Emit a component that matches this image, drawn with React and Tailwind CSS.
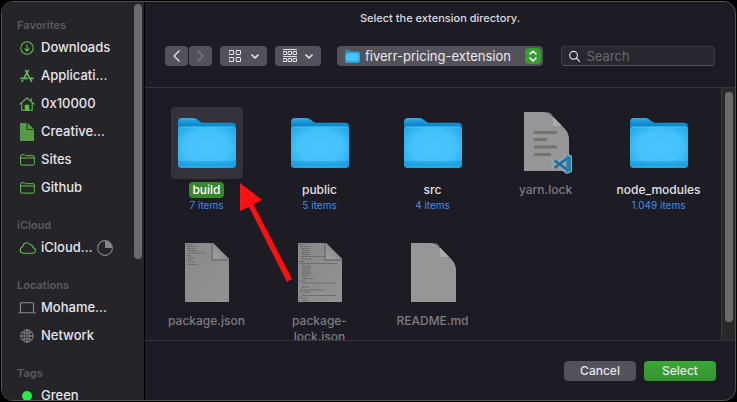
import React from "react";

function Svg({ children, ...props }) {
  return (
    <svg fill="none" stroke="currentColor" strokeLinecap="round" strokeLinejoin="round" aria-hidden="true" {...props}>
      {children}
    </svg>
  );
}

const DownloadIcon = () => (
  <Svg width="14" height="14" viewBox="0 0 14 14" strokeWidth="1.1">
    <circle cx="7" cy="7" r="6.2" />
    <path d="M7 3.8v6M4.8 7.8 7 10l2.2-2.2" />
  </Svg>
);

const AppsIcon = () => (
  <Svg width="14" height="14" viewBox="0 0 14 14" strokeWidth="1.6">
    <path d="M5.6 1.4 11.6 12.4M8.3 1.4 3.9 9.2M1 9.4h6.6M10.6 9.4H13M2.6 11.4l-.6 1" />
  </Svg>
);

const HomeIcon = () => (
  <Svg width="16" height="14" viewBox="0 0 16 14" strokeWidth="1.1">
    <path d="M1 7.2 8 1l7 6.2M2.8 6v7.2h10.4V6M12.3 4.4V1.6" />
    <path d="M6.3 13.2V8.4h3.4v4.8z" fill="currentColor" />
  </Svg>
);

const FileIcon = () => (
  <svg width="14" height="18" viewBox="0 0 14 18" fill="#559b45" aria-hidden="true">
    <path d="M0 0h6.6v6.8H14V18H0z" />
    <path d="M7.6 0 14 5.9H7.6z" />
  </svg>
);

const FolderIcon = () => (
  <Svg width="15" height="12" viewBox="0 0 15 12" strokeWidth="1">
    <path d="M.6 9.8V1.9q0-1.2 1.2-1.2h2.5q.6 0 1 .4l.6.6h7.2q1.2 0 1.2 1.2v7q0 1.2-1.2 1.2H1.8Q.6 11.1.6 9.8zM.6 4h13.7" />
  </Svg>
);

const CloudIcon = () => (
  <Svg width="17" height="12" viewBox="0 0 17 12" strokeWidth="1.1">
    <path d="M4 11.2h9.3a2.7 2.7 0 0 0 .6-5.4A3 3 0 0 0 10.9 2.5 3.9 3.9 0 0 0 3.8 4.7 3.3 3.3 0 0 0 4 11.2z" />
  </Svg>
);

const LaptopIcon = () => (
  <Svg width="18" height="12" viewBox="0 0 18 12" strokeWidth="1.1">
    <path d="M2.5 9.5V1.6q0-.8.8-.8h11.4q.8 0 .8.8v7.9M.7 10.8h16.6" />
  </Svg>
);

const GlobeIcon = () => (
  <Svg width="14" height="14" viewBox="0 0 14 14" strokeWidth=".9">
    <circle cx="7" cy="7" r="6.2" />
    <ellipse cx="7" cy="7" rx="3" ry="6.2" />
    <path d="M7 .8v12.4M.8 7h12.4M2 3.5q5 2 10 0M2 10.5q5-2 10 0" />
  </Svg>
);

const TagDot = () => <span className="size-2.5 rounded-full bg-[#2bea4b]" />;

const sections = [
  {
    title: "Favorites",
    items: [
      { label: "Downloads", icon: DownloadIcon },
      { label: "Applicati...", icon: AppsIcon },
      { label: "0x10000", icon: HomeIcon },
      { label: "Creative...", icon: FileIcon },
      { label: "Sites", icon: FolderIcon },
      { label: "Github", icon: FolderIcon },
    ],
  },
  { title: "iCloud", items: [{ label: "iCloud...", icon: CloudIcon, progress: true }] },
  {
    title: "Locations",
    items: [
      { label: "Mohame...", icon: LaptopIcon, muted: true },
      { label: "Network", icon: GlobeIcon, muted: true },
    ],
  },
  { title: "Tags", items: [{ label: "Green", icon: TagDot }] },
];

function Sidebar() {
  return (
    <nav aria-label="Places" className="flex w-[143px] shrink-0 justify-between overflow-hidden border-r border-black bg-[#252428] pr-[2px]">
      <div className="flex flex-col gap-4 pl-[15px] pt-[15px]">
        {sections.map((section) => (
          <section key={section.title}>
            <h2 className="text-[11px] leading-4 font-semibold text-[#5c5b60]">{section.title}</h2>
            <ul>
              {section.items.map(({ label, icon: Icon, muted, progress }) => (
                <li key={label}>
                  <a href="#" className="flex h-7 items-center gap-1 pt-0.5 whitespace-nowrap text-[13px] font-medium text-[#e6e5e8]">
                    <span className={`flex w-5 justify-center ${muted ? "text-[#8b8a8f]" : "text-[#5fbd4c]"}`}>
                      <Icon />
                    </span>
                    {label}
                    {progress && (
                      <svg width="16" height="16" viewBox="0 0 16 16" aria-hidden="true">
                        <circle cx="8" cy="8" r="7.4" fill="none" stroke="#858489" strokeWidth="1.1" />
                        <path d="M8 8V1a7 7 0 0 1 7 7z" fill="#858489" />
                      </svg>
                    )}
                  </a>
                </li>
              ))}
            </ul>
          </section>
        ))}
      </div>
      <div className="mt-[2px] h-[255px] w-2 shrink-0 rounded-full bg-[#6a696d]" />
    </nav>
  );
}

function Gradients() {
  return (
    <svg width="0" height="0" className="absolute" aria-hidden="true">
      <defs>
        <radialGradient id="folderFront" cx=".5" cy=".5" r=".72">
          <stop offset="0" stopColor="#4cc7fe" />
          <stop offset=".55" stopColor="#44c1fa" />
          <stop offset="1" stopColor="#1ba3e2" />
        </radialGradient>
        <linearGradient id="folderBack" gradientUnits="userSpaceOnUse" x1="0" y1="1" x2="0" y2="10">
          <stop offset="0" stopColor="#38aee6" />
          <stop offset=".5" stopColor="#1593d3" />
          <stop offset="1" stopColor="#0783c6" />
        </linearGradient>
        <linearGradient id="paper" x1="0" y1="0" x2="1" y2="1">
          <stop offset="0" stopColor="#898989" />
          <stop offset="1" stopColor="#929292" />
        </linearGradient>
        <linearGradient id="fold" x1="0" y1="1" x2="1" y2="0">
          <stop offset="0" stopColor="#a4a4a4" />
          <stop offset="1" stopColor="#777777" />
        </linearGradient>
      </defs>
    </svg>
  );
}

function BigFolder({ className }) {
  return (
    <svg className={className} viewBox="0 0 60 52" aria-hidden="true">
      <path d="M1 5q0-4 4-4h11q3 0 5 2l2 1.5q1.500 1.300 4 1.300h28q4 0 4 4V30H1z" fill="url(#folderBack)" />
      <path d="M1 13q0-3.500 3.500-3.500h51Q59 9.500 59 13v34q0 4-4 4H5q-4 0-4-4z" fill="url(#folderFront)" />
      <path d="M1.500 11.500q.5-1.500 3.500-1.500h50q3 0 3.500 1.500" fill="none" stroke="#66c9f5" strokeWidth=".6" />
      <path d="M1 45h58v2q0 4-4 4H5q-4 0-4-4z" fill="#159fdf" fillOpacity=".6" />
      <path d="M1 44.500h58M1.500 47.500h57" stroke="#1c93cc" strokeWidth=".5" />
    </svg>
  );
}

function TextLines({ rows }) {
  return rows.map(([x, y, w]) => <path key={y} d={`M${x} ${y}h${w}`} stroke="#5f5f5f" strokeWidth=".8" strokeDasharray="3 .5" />);
}

const shortRows = [[1, 1.5, 6], [2, 3.5, 9], [2, 5.5, 8], [3, 7.5, 9], [3, 10, 18], [2, 12.5, 4], [3, 14.5, 5], [1, 16.5, 7], [3, 19, 8], [3, 21.5, 9]];
const longRows = [[1, 1.5, 6], [2, 3.5, 10], [3, 5.5, 9], [4, 7.5, 7], [3, 9.5, 9], [4, 11.5, 8], [3, 13.5, 36], [4, 16, 10], [1, 18.5, 6], [2, 20.5, 37], [3, 23, 10], [4, 25, 9], [4, 27, 8], [4, 29, 9], [3, 31, 10], [4, 33, 6], [4, 35.5, 12], [1, 38, 6], [4, 40, 34], [4, 44, 7], [2, 47, 24], [2, 49, 10], [4, 52.5, 34], [1, 55, 8], [4, 57.5, 6]];

function JsonFile({ rows }) {
  return (
    <svg width="44" height="62" viewBox="0 0 44 62" aria-hidden="true">
      <path d="M0 0h28l16 16v43H0z" fill="url(#paper)" />
      <TextLines rows={rows} />
      <path d="M26 0h2v16h16v2H26z" fill="#666666" fillOpacity=".55" />
      <path d="M28 0 44 16H28z" fill="url(#fold)" />
    </svg>
  );
}

function PlainFile({ code }) {
  return (
    <svg width="52" height="62" viewBox="0 0 52 62" aria-hidden="true">
      <path d="M4 0h20q4 0 7.5 3.5l13 13Q49 21 49 27v32H4z" fill="#969696" />
      <path d="M24 0q4 0 6.500 2.500L45 17q-4-3-8-3h-4V6q0-4-4-5.500z" fill="#858585" />
      <path d="M33 4.500 42 14h-9z" fill="#aaaaaa" />
      {code && (
        <g>
          <path d="M14 20.500h23M14 27.500h13M14 35h23M14 42.500h17" stroke="#737373" strokeWidth="3" />
          <path d="m37 50 9-7.500h2l5 2.500v15l-5 2.500h-2L37 55l-3 3-2.500-2v-3l1.500-1-1.500-1v-3l2.500-2z" transform="translate(0 -.8)" fill="#8fa5b1" />
          <path d="m34.500 48.500 13 9.500M34.500 56 47.500 46" stroke="#226f9f" strokeWidth="2.600" fill="none" />
          <path d="m46.500 43 4.500 2v14l-4.500 2z" fill="#2a7eae" />
        </g>
      )}
    </svg>
  );
}

const files = [
  { name: "build", count: "7 items", selected: true },
  { name: "public", count: "5 items" },
  { name: "src", count: "4 items" },
  { name: "yarn.lock", art: <PlainFile code /> },
  { name: "node_modules", count: "1.049 items" },
  { name: "package.json", art: <JsonFile rows={shortRows} /> },
  { name: "package-lock.json", art: <JsonFile rows={longRows} /> },
  { name: "README.md", art: <PlainFile /> },
];

function FileTile({ name, count, selected, art }) {
  return (
    <button type="button" disabled={!count} aria-pressed={!!selected} className="flex flex-col items-center justify-start">
      <span className={`flex size-[72px] items-center justify-center rounded ${selected ? "bg-[#33313a]" : ""}`}>
        {art || <BigFolder className="h-[52px] w-[60px]" />}
      </span>
      <span className={`mt-[3px] max-w-24 rounded px-[3px] text-[12px] leading-4 font-medium ${selected ? "bg-[#37872e] text-white" : count ? "text-[#e2e1e4]" : "text-[#7d7c81]"}`}>
        {name}
      </span>
      {count && <span className="text-[10px] leading-[14px] text-[#3c8ff0]">{count}</span>}
    </button>
  );
}

function Chevron() {
  return (
    <Svg width="8" height="5" viewBox="0 0 8 5" strokeWidth="1.7">
      <path d="m1 1 3 3 3-3" />
    </Svg>
  );
}

const control = "flex h-5 shrink-0 items-center justify-center rounded bg-[#535159] text-[#e3e2e5]";

function Toolbar() {
  return (
    <header className="border-b border-[#35333c] pr-5 pb-[21px] pl-5">
      <h1 className="pt-2 text-center text-[11px] leading-4 font-medium text-[#dddce0]">Select the extension directory.</h1>
      <div className="mt-5 flex items-center">
        <button type="button" aria-label="Back" className={`${control} w-[23px]`}>
          <Svg width="7" height="12" viewBox="0 0 7 12" strokeWidth="1.4"><path d="M6 1 1 6l5 5" /></Svg>
        </button>
        <button type="button" aria-label="Forward" disabled className={`${control} ml-px w-[23px]`}>
          <Svg className="text-[#7e7c83]" width="7" height="12" viewBox="0 0 7 12" strokeWidth="1.4"><path d="m1 1 5 5-5 5" /></Svg>
        </button>
        <button type="button" aria-label="View as icons" aria-haspopup="menu" className={`${control} ml-2 w-[47px] gap-2.5`}>
          <Svg width="12" height="12" viewBox="0 0 12 12" strokeWidth="1">
            <path d="M.5.5h4v4h-4zM7.5.5h4v4h-4zM.5 7.5h4v4h-4zM7.5 7.5h4v4h-4z" />
          </Svg>
          <Chevron />
        </button>
        <button type="button" aria-label="Group items" aria-haspopup="menu" className={`${control} ml-2 w-[46px] gap-2`}>
          <Svg width="14" height="14" viewBox="0 0 14 14" strokeWidth="1">
            <path d="M.5.5h13M.5 7.5h13M.5 2.5h3v3h-3zM5.500 2.500h3v3h-3zM10.500 2.500h3v3h-3zM.5 9.500h3v3h-3zM5.500 9.500h3v3h-3zM10.500 9.500h3v3h-3z" />
          </Svg>
          <Chevron />
        </button>
        <div className="relative ml-4 min-w-0 flex-1">
          <select aria-label="Current folder" className="block h-5 w-full appearance-none rounded bg-[#535159] pr-6 pl-7 text-[13px] leading-5 text-[#ebeaed]">
            <option>fiverr-pricing-extension</option>
          </select>
          <BigFolder className="pointer-events-none absolute top-1 left-2 h-[13px] w-[15px]" />
          <span className="pointer-events-none absolute top-[2px] right-[2px] flex h-4 w-4 items-center justify-center rounded bg-[#399b32] text-white">
            <Svg width="8" height="12" viewBox="0 0 8 12" strokeWidth="1.5"><path d="m1 4 3-3 3 3M1 8l3 3 3-3" /></Svg>
          </span>
        </div>
        <label className="ml-[18px] flex h-5 w-[154px] shrink-0 items-center gap-1.5 rounded border border-[#3c3a43] border-b-[#55535b] bg-[#29272f] pl-[7px] text-[#dddce0]">
          <Svg width="13" height="13" viewBox="0 0 13 13" strokeWidth="1.4"><circle cx="5.2" cy="5.2" r="4.4" /><path d="m8.5 8.5 3.7 3.7" /></Svg>
          <input type="search" aria-label="Search" placeholder="Search" className="w-full min-w-0 bg-transparent text-[13px] leading-4 outline-none placeholder:text-[#69686e]" />
        </label>
      </div>
    </header>
  );
}

function Browser() {
  return (
    <div className="relative flex min-h-0 flex-1 overflow-hidden">
      <div className="grid flex-1 auto-rows-[131px] grid-cols-5 pt-[19px] pr-1.5 pl-[5px]">
        {files.map((file) => <FileTile key={file.name} {...file} />)}
      </div>
      <div className="flex w-3.5 shrink-0 justify-center border-l border-[#3b3b3e] bg-[#29292a] pt-1">
        <div className="h-[230px] w-2 rounded-full bg-[#6b6b6c]" />
      </div>
      <svg className="pointer-events-none absolute top-[95px] left-[94px]" width="56" height="102" viewBox="0 0 56 102" aria-hidden="true">
        <path d="M1 0 23 17l-8.5 4.5L53 96l-5 3L10 24 1 28z" fill="#fd1010" />
      </svg>
    </div>
  );
}

export default function App() {
  return (
    <div className="h-screen bg-black p-px font-['Inter','Liberation_Sans',sans-serif]">
      <Gradients />
      <div role="dialog" aria-label="Select the extension directory" className="flex h-full overflow-hidden rounded-xl border border-[#505054] bg-[#1d1b24]">
        <Sidebar />
        <main className="flex min-w-0 flex-1 flex-col">
          <Toolbar />
          <Browser />
          <footer className="flex shrink-0 justify-end gap-2 border-t border-[#35333c] pt-5 pr-[19px] pb-[19px] text-[12px] leading-5 font-medium text-[#e6e5e8]">
            <button type="button" className="h-5 w-[72px] rounded bg-[#535159]">Cancel</button>
            <button type="button" className="h-5 w-[72px] rounded bg-linear-to-b from-[#3aa936] to-[#35912f]">Select</button>
          </footer>
        </main>
      </div>
    </div>
  );
}
